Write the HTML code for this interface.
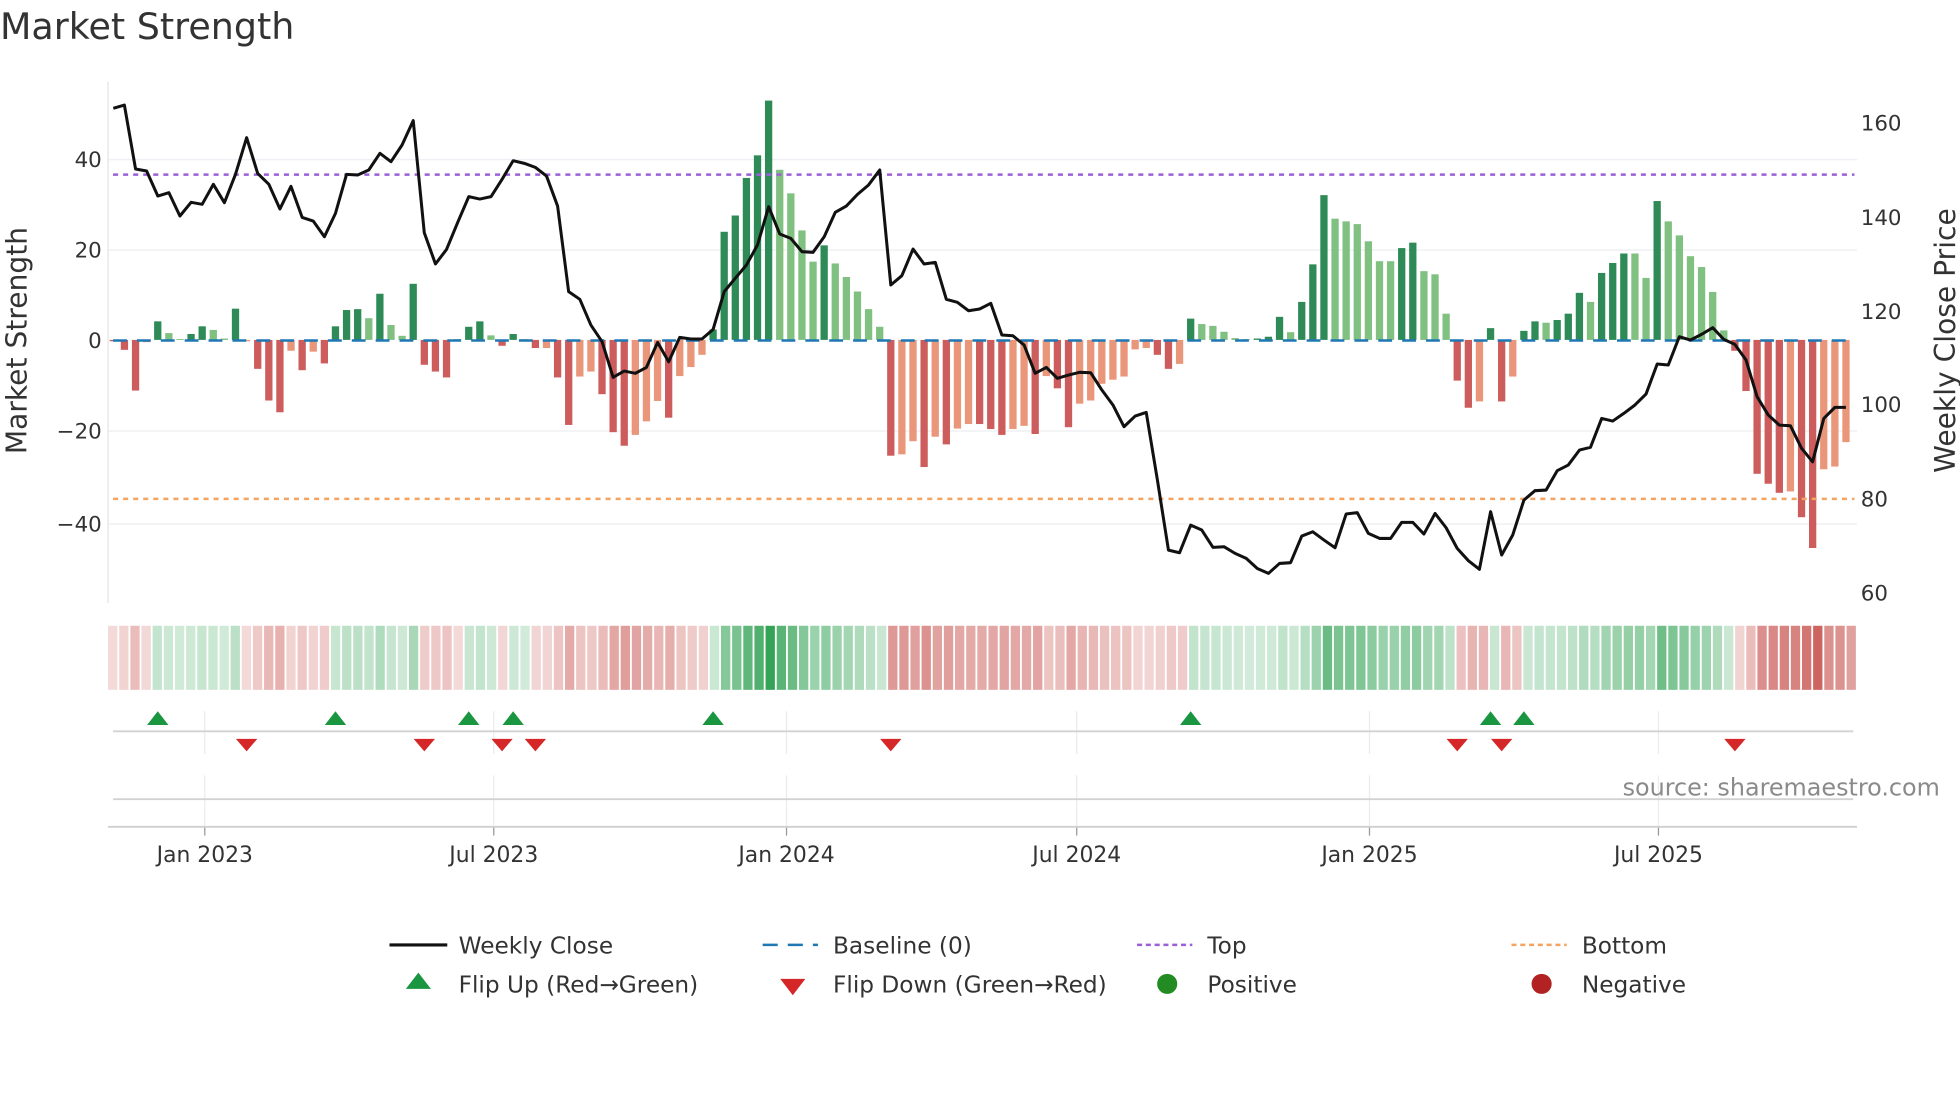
<!DOCTYPE html>
<html><head><meta charset="utf-8">
<style>
html,body{margin:0;padding:0;background:#fff;width:1960px;height:1102px;overflow:hidden}
svg{display:block}
text{font-family:"DejaVu Sans","Liberation Sans",sans-serif}
</style></head>
<body>
<svg id="c" width="1960" height="1102" viewBox="0 0 1560 877" preserveAspectRatio="none" xmlns="http://www.w3.org/2000/svg">
<rect width="1560" height="877" fill="#fff"/>
<text x="0" y="31" font-size="29" fill="#333">Market Strength</text>
<g id="grid"></g>
<g id="strip"></g>
<g id="bars"></g>
<line x1="90" y1="271" x2="1476" y2="271" stroke="#1f77b4" stroke-width="2" stroke-dasharray="11,8"/>
<line x1="90" y1="139" x2="1476" y2="139" stroke="#9b5fd8" stroke-width="2" stroke-dasharray="4,4"/>
<line x1="90" y1="397" x2="1476" y2="397" stroke="#f4a460" stroke-width="2" stroke-dasharray="4,4"/>
<polyline id="price" fill="none" stroke="#111" stroke-width="2.4" stroke-linejoin="round"/>
<g id="marks"></g>
<g font-size="17" fill="#333">
<text x="81" y="133" text-anchor="end">40</text>
<text x="81" y="205" text-anchor="end">20</text>
<text x="81" y="277" text-anchor="end">0</text>
<text x="81" y="349" text-anchor="end">−20</text>
<text x="81" y="423" text-anchor="end">−40</text>
<text x="1481" y="104">160</text>
<text x="1481" y="179">140</text>
<text x="1481" y="254">120</text>
<text x="1481" y="328">100</text>
<text x="1481" y="403">80</text>
<text x="1481" y="478">60</text>
</g>
<text transform="translate(21,271) rotate(-90)" font-size="22.4" fill="#333" text-anchor="middle">Market Strength</text>
<text transform="translate(1556,271) rotate(-90)" font-size="22.4" fill="#333" text-anchor="middle">Weekly Close Price</text>
<g font-size="17.4" fill="#333" text-anchor="middle">
<text x="163" y="686">Jan 2023</text>
<text x="393" y="686">Jul 2023</text>
<text x="626" y="686">Jan 2024</text>
<text x="857" y="686">Jul 2024</text>
<text x="1090" y="686">Jan 2025</text>
<text x="1320" y="686">Jul 2025</text>
</g>
<text x="1544" y="633" font-size="19" fill="#8a8a8a" text-anchor="end">source: sharemaestro.com</text>
<g font-size="18.5" fill="#333">
<line x1="310" y1="752" x2="356" y2="752" stroke="#111" stroke-width="2.5"/>
<text x="365" y="759">Weekly Close</text>
<line x1="607" y1="752" x2="651" y2="752" stroke="#1f77b4" stroke-width="2" stroke-dasharray="12,8"/>
<text x="663" y="759">Baseline (0)</text>
<line x1="905" y1="752" x2="949" y2="752" stroke="#9b5fd8" stroke-width="2" stroke-dasharray="4,3"/>
<text x="961" y="759">Top</text>
<line x1="1203" y1="752" x2="1247" y2="752" stroke="#f4a460" stroke-width="2" stroke-dasharray="4,3"/>
<text x="1259" y="759">Bottom</text>
<polygon points="333,774 343,787 323,787" fill="#1a9641"/>
<text x="365" y="790">Flip Up (Red→Green)</text>
<polygon points="621,779 641,779 631,792" fill="#d62728"/>
<text x="663" y="790">Flip Down (Green→Red)</text>
<circle cx="929" cy="783" r="8" fill="#228b22"/>
<text x="961" y="790">Positive</text>
<circle cx="1227" cy="783" r="8" fill="#b22222"/>
<text x="1259" y="790">Negative</text>
</g>
</svg>
<script>
(function(){
var NS="http://www.w3.org/2000/svg";
function el(t,a,p){var e=document.createElementNS(NS,t);for(var k in a)e.setAttribute(k,a[k]);p.appendChild(e);return e;}
var B=[[-0.3,1],[-2.2,1],[-11.2,1],[-0.5,0],[4.1,1],[1.5,0],[0.2,0],[1.3,1],[3,1],[2.2,0],[0.3,0],[6.9,1],[-0.3,0],[-6.4,1],[-13.4,1],[-16,1],[-2.4,0],[-6.7,1],[-2.6,0],[-5.2,1],[3,1],[6.6,1],[6.8,1],[4.8,0],[10.2,1],[3.3,0],[0.9,0],[12.4,1],[-5.5,1],[-7,1],[-8.3,1],[0.1,0],[2.9,1],[4.1,1],[1,0],[-1.3,1],[1.3,1],[0.1,0],[-1.8,1],[-1.8,0],[-8.3,1],[-18.8,1],
[-8.1,0],[-7,0],[-12,1],[-20.4,1],[-23.4,1],[-21,0],[-18,0],[-13.5,0],[-17.2,1],[-8,0],[-6,0],[-3.3,0],[2.3,1],[23.9,1],[27.5,1],[35.8,1],[40.8,1],[52.9,1],[37.6,0],[32.4,0],[24.2,0],[17.3,0],[20.9,1],[16.9,0],[13.9,0],[10.7,0],[6.8,0],[2.9,0],[-25.6,1],[-25.3,0],[-22.4,0],[-28.1,1],[-21.4,0],[-23.1,1],[-19.6,0],[-18.6,0],[-18.6,1],[-19.7,1],[-21,1],[-19.7,0],
[-19,0],[-20.8,1],[-8,0],[-10.7,1],[-19.3,1],[-14.1,0],[-13.4,0],[-9.7,0],[-8.8,0],[-8.1,0],[-2.1,0],[-1.8,0],[-3.3,1],[-6.4,1],[-5.3,0],[4.7,1],[3.5,0],[3.1,0],[1.8,0],[0.4,0],[0.1,0],[0.3,1],[0.7,1],[5.1,1],[1.7,0],[8.4,1],[16.7,1],[32,1],[26.8,0],[26.2,0],[25.6,0],[21.8,0],[17.4,0],[17.4,0],[20.3,1],[21.5,1],[15.2,0],[14.5,0],[5.8,0],[-9,1],[-15,1],
[-13.6,0],[2.6,1],[-13.6,1],[-8.1,0],[2,1],[4.1,1],[3.8,0],[4.4,1],[5.8,1],[10.4,1],[8.4,0],[14.8,1],[17,1],[19.1,1],[19.1,0],[13.7,0],[30.7,1],[26.2,0],[23.1,0],[18.5,0],[16.1,0],[10.6,0],[2.1,0],[-2.4,1],[-11.3,1],[-29.6,1],[-31.8,1],[-33.8,1],[-33.5,0],[-39.2,1],[-46,1],[-28.6,0],[-28,0],[-22.6,0]];
var L=[55,45,237,243,318,308,378,337,343,283,338,253,143,250,283,357,289,382,393,440,370,253,255,240,190,215,165,92,428,522,478,398,320,327,320,268,212,220,232,258,348,605,628,705,755,862,843,850,832,757,815,742,747,747,718,605,565,525,465,350,432,445,485,487,440,367,348,313,285,240,585,557,477,522,517,628,637,662,657,640,735,737,765,850,832,865,855,847,848,900,945,1010,978,967,1170,1380,1388,1305,1320,1372,1370,1390,1405,1435,1450,1420,1418,1338,1325,1350,1373,1272,1268,1330,1345,1345,1297,1297,1332,1270,1313,1375,1412,1438,1265,1395,1335,1230,1202,1200,1142,1125,1080,1072,985,993,970,945,912,822,825,740,750,733,713,748,763,810,920,975,1005,1007,1075,1115,985,952,952];
var dx=8.84,x0=90.2,z=270.5,u=3.6;
var g=document.getElementById('grid');
[127,199,343,417].forEach(function(y){el('line',{x1:86,y1:y,x2:1478,y2:y,stroke:'#edf0f4','stroke-width':1.2},g);});
el('line',{x1:86,y1:65,x2:86,y2:480,stroke:'#e4e4e4','stroke-width':1},g);
[163,393,626,857,1090,1320].forEach(function(x){
 el('line',{x1:x,y1:566,x2:x,y2:600,stroke:'#ececec','stroke-width':1},g);
 el('line',{x1:x,y1:617,x2:x,y2:662,stroke:'#ececec','stroke-width':1},g);
 el('line',{x1:x,y1:658,x2:x,y2:665,stroke:'#999','stroke-width':1},g);
});
el('line',{x1:90,y1:582,x2:1475,y2:582,stroke:'#d2d2d2','stroke-width':1.5},g);
el('line',{x1:90,y1:636,x2:1475,y2:636,stroke:'#d2d2d2','stroke-width':1.5},g);
el('line',{x1:86,y1:658,x2:1478,y2:658,stroke:'#cfcfcf','stroke-width':1.5},g);
var bg=document.getElementById('bars');
var cols={g1:'#2e8b57',g0:'#80c080',r1:'#cd5c5c',r0:'#e9967a'};
B.forEach(function(b,i){
 var v=b[0],x=x0+dx*i,h=Math.max(Math.abs(v)*u,0.6);
 var c=v>=0?(b[1]?cols.g1:cols.g0):(b[1]?cols.r1:cols.r0);
 el('rect',{x:x-2.9,y:v>=0?z-h:z,width:5.8,height:h,fill:c},bg);
});
var ups=[4,20,32,36,54,97,124,127],downs=[12,28,35,38,70,121,125,146];
var st=[],s=0;
for(var i=0;i<B.length;i++){if(ups.indexOf(i)>=0)s=1;if(downs.indexOf(i)>=0)s=0;st.push(s);}
var sg=document.getElementById('strip');
B.forEach(function(b,i){
 var a=0.22+0.75*Math.min(Math.abs(b[0])/50,1);
 var c=st[i]?'rgba(44,160,80,'+a+')':'rgba(200,85,80,'+a+')';
 el('rect',{x:86+8.87*i,y:498,width:7.4,height:51,fill:c},sg);
});
var mg=document.getElementById('marks');
ups.forEach(function(i){var x=x0+dx*i;el('polygon',{points:(x)+',566 '+(x+8.5)+',577 '+(x-8.5)+',577',fill:'#1a9641'},mg);});
downs.forEach(function(i){var x=x0+dx*i;el('polygon',{points:(x-8.5)+',588 '+(x+8.5)+',588 '+x+',598',fill:'#d62728'},mg);});
var pts=L.map(function(zy,i){return (x0+dx*i).toFixed(1)+','+((zy/3+90)/1.2564).toFixed(1);}).join(' ');
document.getElementById('price').setAttribute('points',pts);
})();
</script>
</body></html>
